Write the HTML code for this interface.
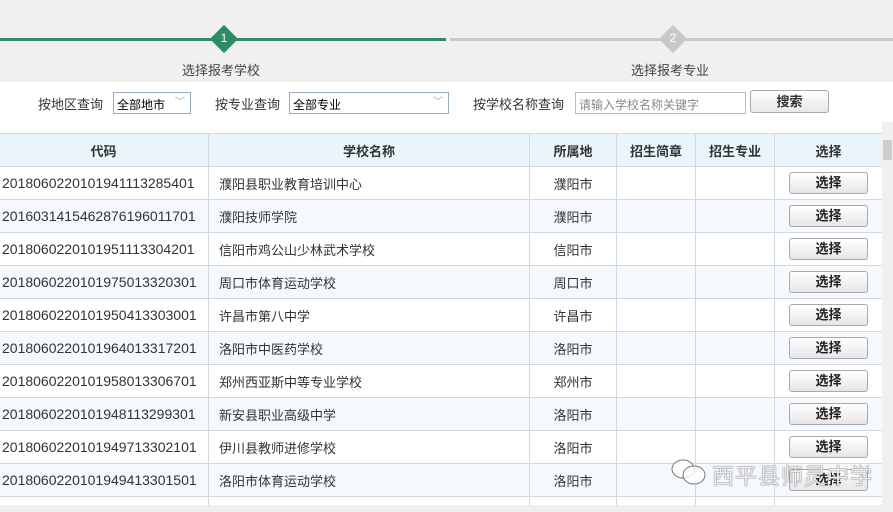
<!DOCTYPE html>
<html><head><meta charset="utf-8"><style>
*{margin:0;padding:0;box-sizing:border-box}
html,body{width:893px;height:512px;overflow:hidden}
body{background:#fff;font-family:"Liberation Sans","Noto Sans CJK SC","Microsoft YaHei",sans-serif;font-size:13px;color:#333;position:relative}
.top{position:absolute;left:0;top:0;width:893px;height:82px;background:#f0f0f0}
.ln{position:absolute;top:38px;height:3px}
.dia{position:absolute;top:29px;width:20px;height:20px;transform:rotate(45deg)}
.num{position:absolute;top:31px;width:20px;text-align:center;color:#fff;font-size:12px}
.lbl{position:absolute;top:60px;font-size:13px;color:#444}
.ctl{position:absolute;top:94px;font-size:13px;color:#333}
.sel{position:absolute;top:92px;height:22px;border:1px solid #9ab;background:#fff;font-size:12px;padding:3px 3px;color:#000}
.arr{position:absolute;right:3px;top:4px;width:12px;height:12px;color:#8ab;font-size:10px;line-height:12px}
table{position:absolute;left:-2px;top:133px;border-collapse:collapse;table-layout:fixed}
td,th{border:1px solid #d0d8e0;height:33px;font-size:13px;white-space:nowrap;overflow:hidden}
th{background:#eaf4fb;font-weight:bold;color:#333;text-align:center}
tr.a td{background:#fff}tr.b td{background:#f5f9fd}
td.c{padding-left:3px;font-size:14px}td.n{padding-left:10px}td.m{text-align:center}
.btn{display:block;margin:0 auto;width:79px;height:22px;border:1px solid #aaa;border-radius:3px;background:linear-gradient(#fff,#e6e6e6);text-align:center;line-height:20px;font-weight:bold;font-size:13px;color:#222}
.sb{position:absolute;left:882px;top:122px;width:11px;height:390px;background:#f0f0f0;z-index:2}
.bot{position:absolute;left:0;top:505px;width:893px;height:7px;background:#efefef;z-index:2}
.wm{position:absolute;left:712px;top:459px;font-size:22px;color:rgba(255,255,255,.9);text-shadow:0 0 1px #555,0 0 1px #555;letter-spacing:1px;z-index:3}
</style></head><body>
<div class="top">
<div class="ln" style="left:0;width:446px;background:#2e8b66"></div>
<div class="ln" style="left:450px;width:443px;background:#c8c8c8"></div>
<div class="dia" style="left:214px;background:#2e8b66"></div><div class="num" style="left:214px">1</div>
<div class="dia" style="left:663px;background:#c8c8c8"></div><div class="num" style="left:663px">2</div>
<div class="lbl" style="left:182px">选择报考学校</div>
<div class="lbl" style="left:631px">选择报考专业</div>
</div>
<div class="ctl" style="left:38px">按地区查询</div>
<div class="sel" style="left:113px;width:78px">全部地市<span class="arr">﹀</span></div>
<div class="ctl" style="left:215px">按专业查询</div>
<div class="sel" style="left:289px;width:160px">全部专业<span class="arr">﹀</span></div>
<div class="ctl" style="left:473px">按学校名称查询</div>
<div class="sel" style="left:575px;width:171px;color:#888;border-color:#bbb">请输入学校名称关键字</div>
<div style="position:absolute;left:750px;top:90px;width:79px;height:23px;border:1px solid #aaa;border-radius:3px;background:linear-gradient(#fff,#e8e8e8);text-align:center;line-height:21px;font-weight:bold">搜索</div>
<table>
<colgroup><col style="width:210px"><col style="width:321px"><col style="width:87px"><col style="width:79px"><col style="width:79px"><col style="width:108px"></colgroup>
<tr><th>代码</th><th>学校名称</th><th>所属地</th><th>招生简章</th><th>招生专业</th><th>选择</th></tr>
<tr class="a"><td class="c">2018060220101941113285401</td><td class="n">濮阳县职业教育培训中心</td><td class="m">濮阳市</td><td></td><td></td><td><span class="btn">选择</span></td></tr>
<tr class="b"><td class="c">2016031415462876196011701</td><td class="n">濮阳技师学院</td><td class="m">濮阳市</td><td></td><td></td><td><span class="btn">选择</span></td></tr>
<tr class="a"><td class="c">2018060220101951113304201</td><td class="n">信阳市鸡公山少林武术学校</td><td class="m">信阳市</td><td></td><td></td><td><span class="btn">选择</span></td></tr>
<tr class="b"><td class="c">2018060220101975013320301</td><td class="n">周口市体育运动学校</td><td class="m">周口市</td><td></td><td></td><td><span class="btn">选择</span></td></tr>
<tr class="a"><td class="c">2018060220101950413303001</td><td class="n">许昌市第八中学</td><td class="m">许昌市</td><td></td><td></td><td><span class="btn">选择</span></td></tr>
<tr class="b"><td class="c">2018060220101964013317201</td><td class="n">洛阳市中医药学校</td><td class="m">洛阳市</td><td></td><td></td><td><span class="btn">选择</span></td></tr>
<tr class="a"><td class="c">2018060220101958013306701</td><td class="n">郑州西亚斯中等专业学校</td><td class="m">郑州市</td><td></td><td></td><td><span class="btn">选择</span></td></tr>
<tr class="b"><td class="c">2018060220101948113299301</td><td class="n">新安县职业高级中学</td><td class="m">洛阳市</td><td></td><td></td><td><span class="btn">选择</span></td></tr>
<tr class="a"><td class="c">2018060220101949713302101</td><td class="n">伊川县教师进修学校</td><td class="m">洛阳市</td><td></td><td></td><td><span class="btn">选择</span></td></tr>
<tr class="b"><td class="c">2018060220101949413301501</td><td class="n">洛阳市体育运动学校</td><td class="m">洛阳市</td><td></td><td></td><td><span class="btn">选择</span></td></tr>
<tr class="a"><td></td><td></td><td></td><td></td><td></td><td></td></tr>
</table>
<div class="sb"><div style="position:absolute;left:1px;top:18px;width:9px;height:20px;background:#cdcdcd"></div></div>
<div class="bot"></div>
<svg style="position:absolute;left:670px;top:458px;z-index:3" width="38" height="28" viewBox="0 0 38 28"><ellipse cx="13" cy="11" rx="11" ry="9" fill="rgba(255,255,255,.8)" stroke="#777" stroke-width="1"/><ellipse cx="24" cy="17" rx="11" ry="9" fill="rgba(255,255,255,.8)" stroke="#777" stroke-width="1"/></svg>
<div class="wm">西平县师灵中学</div>
</body></html>
